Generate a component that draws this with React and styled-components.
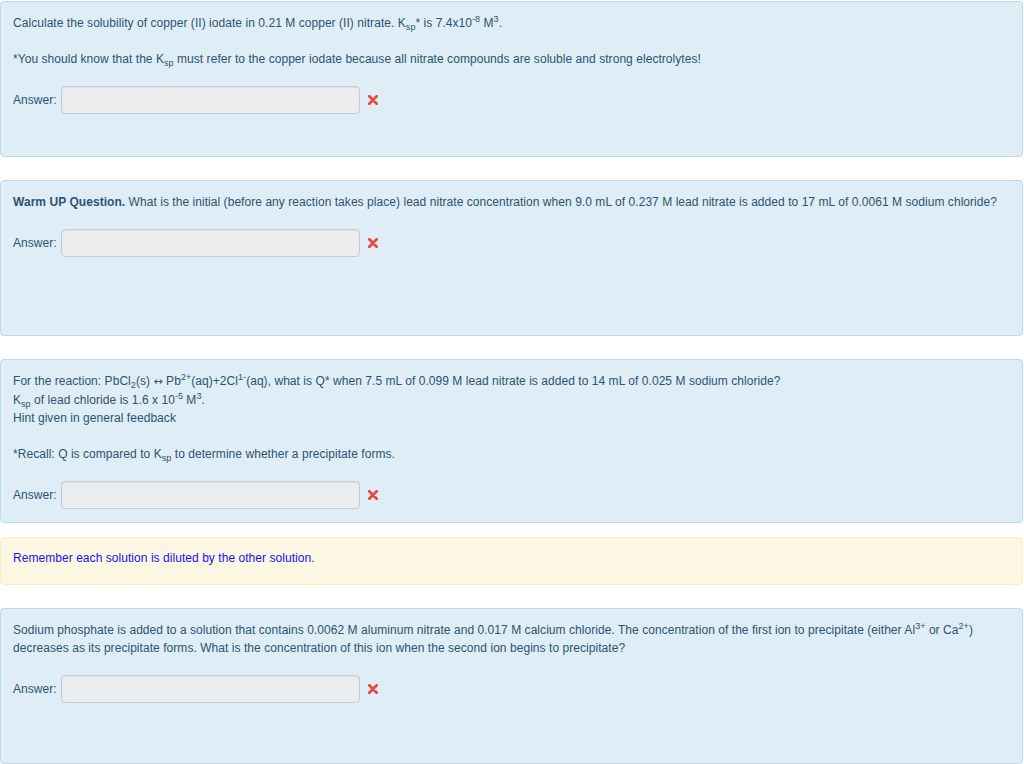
import React from "react";
import styled, { createGlobalStyle } from "styled-components";

const Global = createGlobalStyle`
  html, body { margin: 0; padding: 0; background: #ffffff; }
  body { font-family: "Liberation Sans", Arial, Helvetica, sans-serif; }
`;

const Page = styled.div`
  padding: 1px 1px 0 0;
  display: flex;
  flex-direction: column;
`;

const Question = styled.div`
  & + & { margin-top: 23px; }
  display: flex;
  flex-direction: column;
`;

const Formulation = styled.div`
  box-sizing: border-box;
  min-height: 156px;
  background: #deedf6;
  border: 1px solid #b8dbee;
  border-radius: 4px;
  padding: 12px 12px 13px 12px;
  color: #2e5370;
  font-size: 12px;
  line-height: 18px;
  letter-spacing: 0.05px;
`;

const Text = styled.div`
  margin: 0;
`;

const Blank = styled.div`
  height: 18px;
`;

const Sub = styled.sub`
  font-size: 9px;
  line-height: 1;
  vertical-align: baseline;
  position: relative;
  top: 3px;
`;

const Sup = styled.sup`
  font-size: 9px;
  line-height: 1;
  vertical-align: baseline;
  position: relative;
  top: -5px;
`;

const Arrow = styled.span`
  font-family: "DejaVu Sans", sans-serif;
  font-size: 11px;
`;

const AnswerRow = styled.div`
  display: flex;
  align-items: center;
  margin-top: 18px;
`;

const Label = styled.span`
  font-size: 12px;
  margin-right: 4px;
`;

const Input = styled.div`
  box-sizing: border-box;
  width: 299px;
  height: 28px;
  background: #eaecee;
  border: 1px solid #c4cdd4;
  border-radius: 4px;
  box-shadow: inset 0 1px 1px rgba(0, 0, 0, 0.06);
`;

const Cross = styled.svg`
  margin-left: 8px;
  width: 10px;
  height: 10px;
  flex: none;
`;

const Feedback = styled.div`
  margin-top: 14px;
  box-sizing: border-box;
  background: #fcf7e3;
  border: 1px solid #f9ecc6;
  border-radius: 4px;
  padding: 11px 12px 17px 12px;
  color: #1414f0;
  font-size: 12px;
  line-height: 18px;
  letter-spacing: 0.05px;
`;

const Bold = styled.b`
  font-weight: bold;
`;

const CrossIcon = () => (
  <Cross viewBox="0 0 10 10">
    <path d="M1.3 1.3 L8.7 8.7 M8.7 1.3 L1.3 8.7" stroke="#e8493b" strokeWidth="2.8" strokeLinecap="round" fill="none" />
  </Cross>
);

const Answer = () => (
  <AnswerRow>
    <Label>Answer:</Label>
    <Input />
    <CrossIcon />
  </AnswerRow>
);

const Ksp = () => (
  <>
    K<Sub>sp</Sub>
  </>
);

export default function App() {
  return (
    <>
      <Global />
      <Page>
        <Question>
          <Formulation>
            <Text>
              Calculate the solubility of copper (II) iodate in 0.21 M copper (II) nitrate. <Ksp />* is 7.4x10<Sup>-8</Sup> M<Sup>3</Sup>.
            </Text>
            <Blank />
            <Text>
              *You should know that the <Ksp /> must refer to the copper iodate because all nitrate compounds are soluble and strong electrolytes!
            </Text>
            <Answer />
          </Formulation>
        </Question>

        <Question>
          <Formulation>
            <Text>
              <Bold>Warm UP Question.</Bold> What is the initial (before any reaction takes place) lead nitrate concentration when 9.0 mL of 0.237 M lead nitrate is added to 17 mL of 0.0061 M sodium chloride?
            </Text>
            <Answer />
          </Formulation>
        </Question>

        <Question>
          <Formulation>
            <Text>
              For the reaction: PbCl<Sub>2</Sub>(s) <Arrow>↔</Arrow> Pb<Sup>2+</Sup>(aq)+2Cl<Sup>1-</Sup>(aq), what is Q* when 7.5 mL of 0.099 M lead nitrate is added to 14 mL of 0.025 M sodium chloride?
            </Text>
            <Text>
              <Ksp /> of lead chloride is 1.6 x 10<Sup>-5</Sup> M<Sup>3</Sup>.
            </Text>
            <Text>Hint given in general feedback</Text>
            <Blank />
            <Text>
              *Recall: Q is compared to <Ksp /> to determine whether a precipitate forms.
            </Text>
            <Answer />
          </Formulation>
          <Feedback>Remember each solution is diluted by the other solution.</Feedback>
        </Question>

        <Question>
          <Formulation>
            <Text>
              Sodium phosphate is added to a solution that contains 0.0062 M aluminum nitrate and 0.017 M calcium chloride. The concentration of the first ion to precipitate (either Al<Sup>3+</Sup> or Ca<Sup>2+</Sup>) decreases as its precipitate forms. What is the concentration of this ion when the second ion begins to precipitate?
            </Text>
            <Answer />
          </Formulation>
        </Question>
      </Page>
    </>
  );
}
